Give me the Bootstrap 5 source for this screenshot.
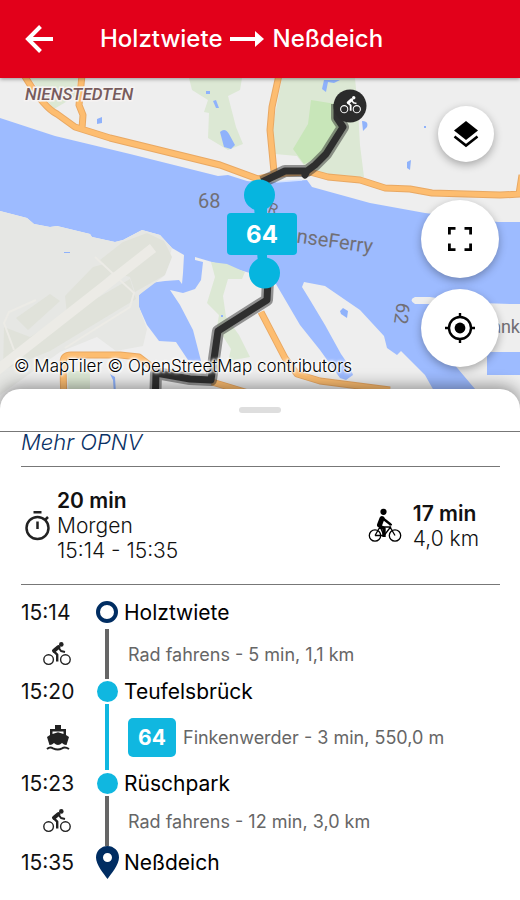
<!DOCTYPE html>
<html lang="de">
<head>
<meta charset="utf-8">
<meta name="viewport" content="width=device-width, initial-scale=1">
<title>Holztwiete – Neßdeich</title>
<link href="https://cdn.jsdelivr.net/npm/bootstrap@5.3.0/dist/css/bootstrap.min.css" rel="stylesheet">
<style>
  body { font-family: Inter, "Liberation Sans", sans-serif; font-size: 21px; line-height: 25px; color: #111; background: #fff; }
  svg { display: block; }
  .topbar { background: #e2001a; min-height: 78px; padding: 0 24px; gap: 46px; box-shadow: 0 1px 4px rgba(0,0,0,.4); z-index: 2; }
  .topbar h1 { font-size: 24px; line-height: 28px; font-weight: 500; gap: 8px; }
  .map-pane { height: 331px; }
  .map-pane > svg { width: 100%; height: 100%; }
  .map-tools { top: 28px; right: 21px; gap: 11px; }
  .fab { width: 78px; height: 78px; background: #fff; color: #000; box-shadow: 0 3px 8px rgba(0,0,0,.3); }
  .fab-sm { width: 56px; height: 56px; margin: 0 5px 27px 0; }
  .credits { left: 14px; bottom: 31px; font-size: 17px; line-height: 24px; font-weight: 300; gap: 5px;
    text-shadow: 0 0 2px #fff, 0 0 2px #fff, 1px 1px 2px #fff, -1px -1px 2px #fff, 0 0 4px #fff, 0 0 4px #fff; }
  .credits a { color: #000; }
  .sheet { background: #fff; border-radius: 20px 20px 0 0; margin-top: -20px; z-index: 1; box-shadow: 0 -3px 16px rgba(0,0,0,.4); }
  .grip { height: 43px; border-bottom: 1px solid #777; }
  .grip button { width: 42px; height: 6px; background: #dedede; border-radius: 3px; }
  .details { padding: 0 20px 20px 21px; }
  .more { height: 35px; border-bottom: 1px solid #777; }
  .more a { color: #0a3166; font-size: 22px; line-height: 20px; font-weight: 300; }
  .summary { height: 118px; border-bottom: 1px solid #777; font-weight: 300; }
  .summary strong { font-weight: 600; }
  .total { gap: 4px; padding-left: 2px; }
  .ride { gap: 11px; padding-right: 21px; }
  .trip { display: grid; grid-template-columns: 75px 22px 1fr; grid-template-rows: 34px 50px 25px 66px 26px 50px 33px; margin: 10px 0 0; align-items: center; }
  .trip .place { padding-left: 6px; color: #000; }
  .trip .leg { padding-left: 10px; gap: 7px; font-size: 18px; color: #666; }
  .trip .mode { padding-left: 22px; }
  .track { width: 4px; height: 100%; justify-self: center; background: #666; }
  .track-ferry { background: #10b7e0; }
  .halt { width: 21px; height: 21px; justify-self: center; border-radius: 50%; background: #10b7e0; }
  .origin { width: 22px; height: 22px; background: #fff; border: 4px solid #002d62; }
  .line-no { background: #10b7e0; color: #fff; border-radius: 5px; width: 48px; height: 39px; font-size: 21px; font-weight: 700; }
</style>
<script src="https://cdn.jsdelivr.net/npm/bootstrap@5.3.0/dist/js/bootstrap.bundle.min.js"></script>
</head>
<body>
<svg width="0" height="0" class="position-absolute" aria-hidden="true">
  <symbol id="cyclist" viewBox="0 0 28 24">
    <g fill="none" stroke="currentColor">
      <circle cx="5.6" cy="17.6" r="4.8" stroke-width="1.4"/>
      <circle cx="22.4" cy="17.6" r="4.8" stroke-width="1.4"/>
      <path d="M15.500 5 11 8.800" stroke-width="4" stroke-linecap="round"/>
      <path d="M10.600 9.200 14.200 12.600V19.500" stroke-width="2.400" stroke-linejoin="round"/>
      <path d="M15.500 5.500 18 9 22 9.900" stroke-width="2" stroke-linejoin="round"/>
    </g>
    <circle cx="18.3" cy="2.4" r="2.3" fill="currentColor"/>
  </symbol>
</svg>
<div class="d-flex flex-column min-vh-100">
  <header class="topbar d-flex align-items-center position-relative text-white">
    <button type="button" class="btn p-0 border-0 text-white" aria-label="Zurück">
      <svg width="30" height="30" viewBox="0 0 30 30" fill="none" stroke="currentColor" stroke-width="4"><path d="M29 15H4M16.5 2.5 4 15l12.500 12.500"/></svg>
    </button>
    <h1 class="d-flex align-items-center m-0">
      <span>Holztwiete</span>
      <svg width="34" height="18" viewBox="0 0 34 18" fill="currentColor" role="img" aria-label="nach"><path d="M0 7H25V1L34 9 25 17V11H0Z"/></svg>
      <span>Neßdeich</span>
    </h1>
  </header>

  <section class="map-pane position-relative flex-shrink-0" aria-label="Karte">
    <svg viewBox="0 78 520 331" preserveAspectRatio="xMidYMid slice" font-family="Roboto, sans-serif">
      <rect y="78" width="520" height="331" fill="#9dbbff"/>
      <path fill="#eee" d="M0 78H520V222H498L425 213 370 203 312 187 307 180 262 183 247 181 228 175 218 176 130 154 55 136 0 118Z"/>
      <path fill="#eee" d="M0 211 27 218 34 224 50 227 57 226 90 234 92 237 115 242 123 240 142 230 160 235 172 248 184 255 183 273 182 284 179 280 165 281 150 283 139 295 139 307 147 325 159 341 176 342 188 360 201 361 193 330 180 305 170 290 183 293 195 289 201 280 203 262 195 260 195 257 212 262 250 273 276 284 300 325 320 350 340 378 346 380 353 375 350 367 341 354 325 325 310 300 302 287 304 282 325 286 360 310 384 336 387 348 397 355 401 351 425 375 434 391V409H0Z"/>
      <path fill="#eee" d="M415 297H430Q470 304 520 304V352H487V375H520V409H492L453 363Q440 330 436 304H415Q408 300 415 297Z"/>
      <path fill="#e6e7e4" d="M0 211 27 218 34 224 50 227 57 226 90 234 92 237 115 242 123 240 142 230 160 235 172 248 164 276 139 295 139 307 147 329 143 346 116 351 97 337 60 352 0 395Z"/>
      <g fill="#e0e2da">
        <path d="M123 242 147 233 164 241 172 257 165 275 135 292 130 277 112 272 100 260Z"/>
        <path d="M65 296 93 267 111 262 115 270 67 314ZM16 318 50 294 60 301 28 330Z"/>
        <path d="M4 327 30 337 130 279 136 299 50 351 3 370Z"/>
      </g>
      <g fill="none" stroke="#ecebe6">
        <path stroke-width="10" d="M-4 371 153 248"/>
        <path stroke-width="2" d="M95 257 134 293 130 307 65 348M14 350 4 323 9 312 36 300"/>
      </g>
      <path fill="#dce8d4" d="M30 78H78L76 96 54 109 45 98ZM189 78H242L240 90 228 96 236 127 243 144 228 150 208 138 209 113 204 112 208 100 192 90ZM282 78H355L358 110 360 145 364 177 312 173 306 168 297 156 275 154 272 130ZM211 262 227 264 245 272 242 279 228 279 223 296 226 317 239 335 250 357 228 361 231 349 217 327 219 315 207 303 215 277ZM67 371H90V395H69Z"/>
      <path fill="#c8e6b9" d="M311 100 342 105 344 128 324 155 304 164 293 149 308 124Z"/>
      <g fill="#8fb2fb">
        <path d="M97 119 102 117 102 123 97 124ZM206 91H210V94H206ZM213 101 216 100 219 108 216 108ZM220 132Q225 127 229 134L235 145 231 149 224 147ZM324 80H340L334 83 328 82 326 92 322 89ZM362 121Q369 121 367 127L363 131ZM424 126H426V128H424ZM407 162 411 160 410 170 407 168ZM340 311 343 308 348 311 347 318 341 314ZM221 315H223V317H221ZM64 252H70V253H64Z"/>
        <path d="M110 374 115 377 116 394 114 394 113 380Z"/>
      </g>
      <g fill="none" stroke-linejoin="round">
        <path stroke="#e9a862" stroke-width="7" d="M24 75Q44 108 57 114L75 127 110 138 220 165 258 179 285 173 310 172 328 177 360 180 385 188 410 189 432 193 500 195 522 194M82 75 79 105 83 115 82 129M279 75 272 107 270 130 274 172M519 194 522 175M64 409 63 363Q63 355 71 355H120L139 357 156 370M212 382 255 395M261 312 285 358 297 374 320 381 390 390"/>
        <path stroke="#fdbd70" stroke-width="5" d="M24 75Q44 108 57 114L75 127 110 138 220 165 258 179 285 173 310 172 328 177 360 180 385 188 410 189 432 193 500 195 522 194M82 75 79 105 83 115 82 129M279 75 272 107 270 130 274 172M519 194 522 175M64 409 63 363Q63 355 71 355H120L139 357 156 370M212 382 255 395M261 312 285 358 297 374 320 381 390 390"/>
      </g>
      <path fill="none" stroke="#d5e3ff" stroke-width="1.500" d="M276 182 302 180"/>
      <g fill="#716f75">
        <text x="198" y="208" font-size="20">68</text>
        <text font-size="20" transform="translate(271 239) rotate(8)">HanseFerry</text>
        <text font-size="15" transform="translate(267 212) rotate(20)">R</text>
        <text font-size="19" transform="translate(397 302) rotate(98)">62</text>
        <text x="520" y="333" font-size="18" text-anchor="end">ank</text>
      </g>
      <text x="25" y="100" font-size="17" font-weight="500" font-style="italic" fill="#775b5d" stroke="#f6f3f2" stroke-width="3" paint-order="stroke">NIENSTEDTEN</text>
      <g fill="none" stroke-linejoin="round">
        <path stroke="#333" stroke-opacity=".5" stroke-width="12" d="M337 104 337 118 343 127 326 154 315 165 307 171 285 171 262 182M268 280 267 300 218 331 211 380 190 379 156 373 155 409"/>
        <path stroke="#2e2e2e" stroke-width="7" d="M337 104 337 118 343 127 326 154 315 165 307 171 305 175 307 171 285 171 262 182M268 280 267 300 218 331 211 380 190 379 156 373 155 409"/>
      </g>
      <circle cx="350" cy="106" r="16.500" fill="#2b2b2b"/>
      <use href="#cyclist" x="340" y="96" width="21" height="18" color="#fff"/>
      <g fill="#06b5df">
        <circle cx="259.500" cy="195" r="15.500"/>
        <path d="M254 205H267V265H258Z"/>
        <circle cx="264.500" cy="273" r="15.500"/>
        <rect x="227" y="213" width="70" height="42" rx="4"/>
      </g>
      <text x="262" y="243" text-anchor="middle" font-family="Inter, sans-serif" font-size="24" font-weight="700" fill="#fff">64</text>
    </svg>

    <div class="map-tools position-absolute d-flex flex-column align-items-end">
      <button type="button" class="fab fab-sm btn rounded-circle p-0 border-0 d-flex align-items-center justify-content-center" aria-label="Kartenebenen">
        <svg width="26" height="28" viewBox="0 0 26 28"><path d="M13 1 25 10.500 13 20 1 10.500Z" fill="currentColor"/><path d="M1.500 16.500 13 25.500 24.500 16.500" fill="none" stroke="currentColor" stroke-width="2.600"/></svg>
      </button>
      <button type="button" class="fab btn rounded-circle p-0 border-0 d-flex align-items-center justify-content-center" aria-label="Vollbild">
        <svg width="26" height="26" viewBox="0 0 26 26" fill="none" stroke="currentColor" stroke-width="2.800"><path d="M2.400 8.500V2.400H8.500M17.500 2.400H23.600V8.500M23.600 17.500V23.600H17.500M8.500 23.600H2.400V17.500"/></svg>
      </button>
      <button type="button" class="fab btn rounded-circle p-0 border-0 d-flex align-items-center justify-content-center" aria-label="Mein Standort">
        <svg width="30" height="30" viewBox="0 0 30 30" fill="none" stroke="currentColor" stroke-width="2.400"><circle cx="15" cy="15" r="11"/><circle cx="15" cy="15" r="5.400" fill="currentColor" stroke="none"/><path d="M15 0V4.500M15 25.500V30M0 15H4.500M25.500 15H30"/></svg>
      </button>
    </div>
    <div class="credits position-absolute d-flex">
      <a href="#maptiler" class="text-decoration-none">© MapTiler</a>
      <a href="#osm" class="text-decoration-none">© OpenStreetMap contributors</a>
    </div>
  </section>

  <main class="sheet position-relative flex-grow-1">
    <div class="grip d-flex align-items-center justify-content-center">
      <button type="button" class="btn p-0 border-0" aria-label="Details verschieben"></button>
    </div>
    <div class="details">
      <div class="more d-flex align-items-start"><a href="#mehr" class="text-decoration-none fst-italic">Mehr OPNV</a></div>

      <section class="summary d-flex align-items-center justify-content-between">
        <div class="total d-flex align-items-center">
          <svg width="30" height="30" viewBox="0 0 30 30" fill="none" stroke="#222" stroke-width="2.500"><circle cx="14.500" cy="17" r="11"/><path d="M10.500 1.300H18.500M14.500 10.500V18M22.500 8.500 25 6"/></svg>
          <div><strong class="d-block">20 min</strong><span class="d-block">Morgen</span><span class="d-block">15:14 - 15:35</span></div>
        </div>
        <div class="ride d-flex align-items-center">
          <svg width="34" height="35" viewBox="0 0 34 35" fill="none" stroke="#000">
            <g stroke-width="1.300"><circle cx="7" cy="27.500" r="5.700"/><circle cx="27" cy="27.500" r="5.700"/><path d="M7 27.500H16L23 18.500M12 18.500 16 27.500M7 27.500 12 19H22L27 27.500M21.500 17 24 16.500"/></g>
            <circle cx="15.500" cy="3.800" r="3.100" fill="#000" stroke="none"/>
            <path d="M14 10.500 11.500 17" stroke-width="5" stroke-linecap="round"/>
            <path d="M15 10.500 22 16" stroke-width="2.400" stroke-linecap="round"/>
            <path d="M11.500 18 16 20.500V29" stroke-width="3.400" stroke-linejoin="round"/>
          </svg>
          <div><strong class="d-block">17 min</strong><span class="d-block">4,0 km</span></div>
        </div>
      </section>

      <section class="trip" aria-label="Reiseverlauf">
        <time>15:14</time><span class="halt origin"></span><span class="place">Holztwiete</span>

        <div class="mode"><svg width="28" height="24"><use href="#cyclist" width="28" height="24" color="#222"/></svg></div>
        <span class="track"></span><span class="leg">Rad fahrens - 5 min, 1,1 km</span>

        <time>15:20</time><span class="halt"></span><span class="place">Teufelsbrück</span>

        <div class="mode"><svg width="30" height="27" viewBox="1 0 30 27"><path fill="#222" d="M13 1H19V5H24V11L27 13 24.500 21H24Q22 21 20 19 16 23 12 19 10 21 8 21H7.500L5 13 8 11V5H13ZM10.500 7.500V10L16 8.300 21.500 10V7.500Z"/><path d="M5 25Q8 22.500 11 24.300 16 26.500 20 24.300 23 22.500 27 25" fill="none" stroke="#222" stroke-width="2"/></svg></div>
        <span class="track track-ferry"></span>
        <span class="leg d-flex align-items-center"><span class="line-no d-flex align-items-center justify-content-center">64</span><span>Finkenwerder - 3 min, 550,0 m</span></span>

        <time>15:23</time><span class="halt"></span><span class="place">Rüschpark</span>

        <div class="mode"><svg width="28" height="24"><use href="#cyclist" width="28" height="24" color="#222"/></svg></div>
        <span class="track"></span><span class="leg">Rad fahrens - 12 min, 3,0 km</span>

        <time>15:35</time>
        <svg width="24" height="33" viewBox="0 0 24 33"><path fill="#002d62" fill-rule="evenodd" d="M11.500 0A11.500 11.500 0 0 1 23 11.500C23 19 15 28 11.500 33 8 28 0 19 0 11.500A11.500 11.500 0 0 1 11.500 0ZM11.500 7A4.500 4.500 0 1 0 11.500 16 4.500 4.500 0 1 0 11.500 7Z"/></svg>
        <span class="place">Neßdeich</span>
      </section>
    </div>
  </main>
</div>
</body>
</html>
